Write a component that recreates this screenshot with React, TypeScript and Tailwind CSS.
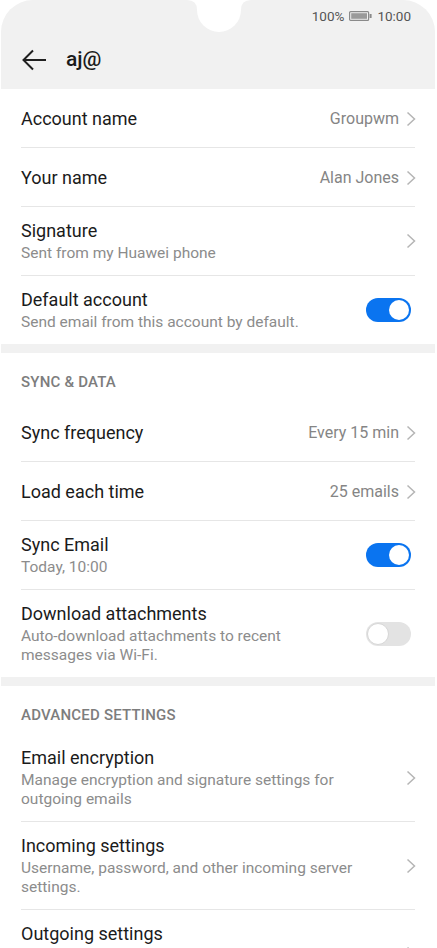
import type { ReactNode } from "react";

function Chevron() {
  return (
    <svg width="10" height="16" viewBox="0 0 10 16" className="shrink-0">
      <path d="M1.5 1.5 L8.5 8 L1.5 14.5" fill="none" stroke="#b5b5b5" strokeWidth="1.5" />
    </svg>
  );
}

function Toggle({ on }: { on: boolean }) {
  if (on) {
    return (
      <div className="mr-[5px] flex h-[24px] w-[45px] shrink-0 items-center justify-end rounded-full bg-[#0a74f0] pr-[2px]">
        <div className="h-[20px] w-[20px] rounded-full bg-white" />
      </div>
    );
  }
  return (
    <div className="mr-[5px] flex h-[24px] w-[45px] shrink-0 items-center rounded-full bg-[#e3e3e3] pl-[1px]">
      <div className="h-[22px] w-[22px] rounded-full border border-[#d6d6d6] bg-white" />
    </div>
  );
}

function Divider() {
  return <div className="mx-5 h-px bg-[#e6e6e6]" />;
}

function Band() {
  return <div className="h-[9px] bg-[#f1f1f1]" />;
}

function Row({ title, value }: { title: string; value: string }) {
  return (
    <div className="flex h-[58px] items-center pl-5 pr-[19px] pt-px">
      <span className="flex-1 text-[18px] leading-6 text-[#1b1b1b]">{title}</span>
      <span className="mr-[7px] text-[16px] text-[#858585]">{value}</span>
      <Chevron />
    </div>
  );
}

function SubRow({ title, sub, right }: { title: string; sub: string; right: ReactNode }) {
  return (
    <div className="flex items-center py-3 pl-5 pr-[19px]">
      <div className="flex-1">
        <div className="text-[18px] leading-6 text-[#1b1b1b]">{title}</div>
        <div className="mt-px pr-10 text-[15.5px] leading-[19px] text-[#8c8c8c]">{sub}</div>
      </div>
      {right}
    </div>
  );
}

function Section({ label, h }: { label: string; h: string }) {
  return (
    <div className={`${h} px-5 pt-[19px] text-[15px] font-medium leading-5 tracking-[0.2px] text-[#7d7d7d]`}>{label}</div>
  );
}

export default function App() {
  return (
    <div className="h-[948px] w-[437px] overflow-hidden bg-white" style={{ fontFamily: "Roboto, 'Noto Sans', sans-serif" }}>
      <div className="ml-px w-[434px]">
        <div className="relative h-[89px] rounded-t-[32px] bg-[#f1f1f1]">
          <svg className="absolute left-0 top-0" width="434" height="34" viewBox="0 0 434 34">
            <path d="M186 0 Q196 0 196 10 A22 22 0 0 0 240 10 Q240 0 250 0 Z" fill="#fff" />
          </svg>
          <div className="flex h-[31px] items-center justify-end gap-[5px] pr-[24px] pt-px text-[13.5px] text-[#555]">
            <span>100%</span>
            <svg width="23" height="10" viewBox="0 0 23 10">
              <rect x="0.6" y="0.6" width="19" height="8.8" rx="1" fill="none" stroke="#8a8a8a" strokeWidth="1.2" />
              <rect x="2.2" y="2.2" width="15.8" height="5.6" fill="#9a9a9a" />
              <rect x="20.6" y="3" width="2" height="4" fill="#8a8a8a" />
            </svg>
            <span>10:00</span>
          </div>
          <div className="flex h-[57px] items-center pl-[21px]">
            <svg width="26" height="22" viewBox="0 0 26 22">
              <path d="M11 1.5 L1.5 11 L11 20.5 M1.5 11 H24" fill="none" stroke="#202020" strokeWidth="2" />
            </svg>
            <span className="ml-[18px] text-[21px] font-medium text-[#1b1b1b]">aj@</span>
          </div>
        </div>

        <Row title="Account name" value="Groupwm" />
        <Divider />
        <Row title="Your name" value="Alan Jones" />
        <Divider />
        <SubRow title="Signature" sub="Sent from my Huawei phone" right={<Chevron />} />
        <Divider />
        <SubRow title="Default account" sub="Send email from this account by default." right={<Toggle on />} />
        <Band />

        <Section label="SYNC & DATA" h="h-[50px]" />
        <Row title="Sync frequency" value="Every 15 min" />
        <Divider />
        <Row title="Load each time" value="25 emails" />
        <Divider />
        <SubRow title="Sync Email" sub="Today, 10:00" right={<Toggle on />} />
        <Divider />
        <SubRow
          title="Download attachments"
          sub="Auto-download attachments to recent messages via Wi-Fi."
          right={<Toggle on={false} />}
        />
        <Band />

        <Section label="ADVANCED SETTINGS" h="h-[48px]" />
        <SubRow
          title="Email encryption"
          sub="Manage encryption and signature settings for outgoing emails"
          right={<Chevron />}
        />
        <Divider />
        <SubRow
          title="Incoming settings"
          sub="Username, password, and other incoming server settings."
          right={<Chevron />}
        />
        <Divider />
        <SubRow
          title="Outgoing settings"
          sub="Username, password, and other outgoing server settings."
          right={<Chevron />}
        />
      </div>
    </div>
  );
}
